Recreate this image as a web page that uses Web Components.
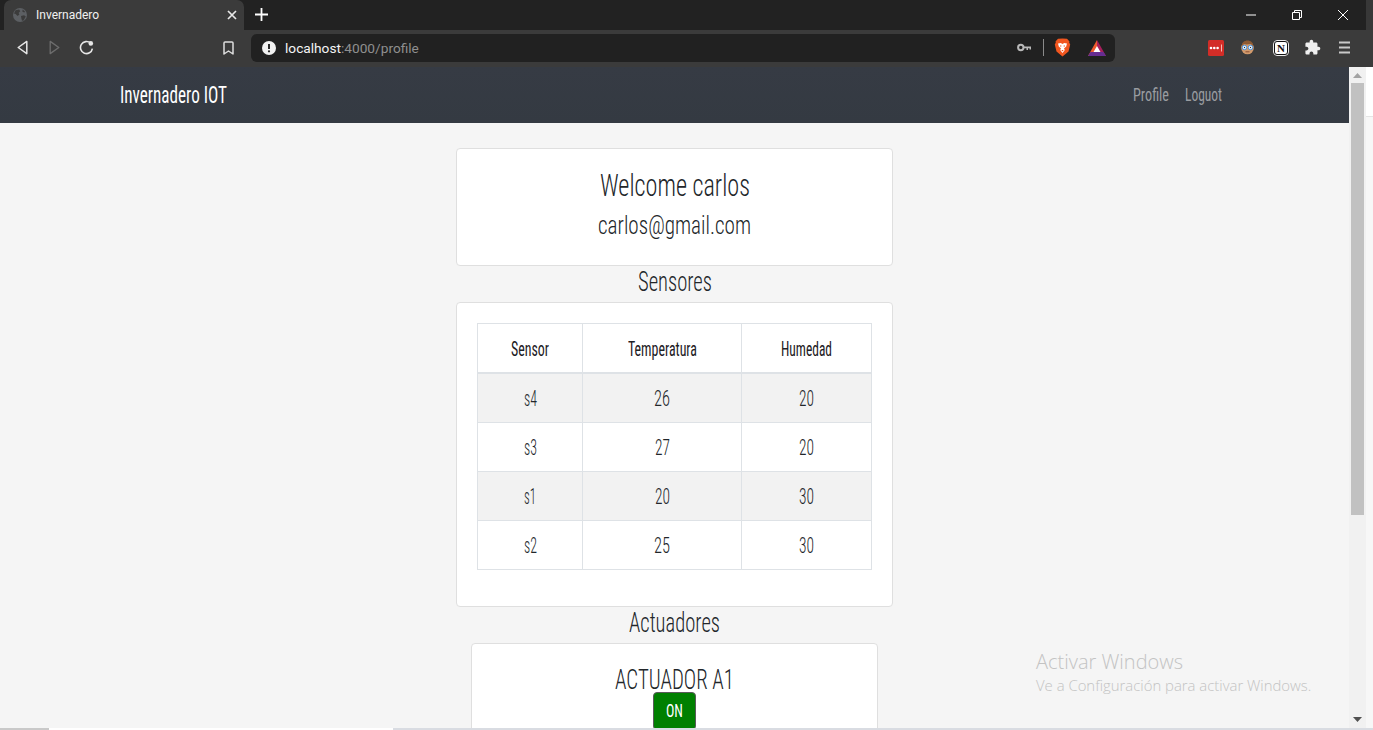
<!DOCTYPE html>
<html lang="es">
<head>
<meta charset="utf-8">
<title>Invernadero</title>
<style>
  html, body { margin: 0; height: 100%; overflow: hidden; background: #f5f5f5; }
</style>
</head>
<body>
<browser-shell>
  <app-navbar></app-navbar>
  <profile-page></profile-page>
</browser-shell>

<script>
// Oswald is not installed, so condensed text is fitted to the width it has in the design
class NarrowText extends HTMLElement {
  connectedCallback() {
    if (this.shadowRoot) return;
    this.attachShadow({ mode: 'open' });
    this.shadowRoot.innerHTML = `
      <style>
        :host {
          display: inline-block;
          white-space: nowrap;
          font-family: "Roboto Condensed", "Liberation Sans", sans-serif;
          line-height: 1;
        }
        span { display: inline-block; transform-origin: 0 50%; }
      </style>
      <span><slot></slot></span>
    `;
    this.style.fontSize = this.getAttribute('size') + 'px';
    const inner = this.shadowRoot.querySelector('span');
    const target = parseFloat(this.getAttribute('w'));
    const natural = inner.getBoundingClientRect().width;
    inner.style.transform = `scaleX(${target / natural})`;
    this.style.width = target + 'px';
  }
}
customElements.define('narrow-text', NarrowText);

class BrowserShell extends HTMLElement {
  connectedCallback() {
    this.attachShadow({ mode: 'open' });
    this.shadowRoot.innerHTML = `
      <style>
        :host {
          display: flex;
          flex-direction: column;
          height: 730px;
          width: 1373px;
          position: relative;
          overflow: hidden;
          font-family: Roboto, "Liberation Sans", sans-serif;
        }
        .view { flex: 1; display: flex; min-height: 0; }
        .page { width: 1349px; display: flex; flex-direction: column; overflow: hidden; background: #f5f5f5; }
        .edge { width: 7px; display: flex; flex-direction: column; }
        .edge i { display: block; height: 49px; background: #fff; border-bottom: 1px solid #e4e4e4; }
        .edge b { display: block; flex: 1; background: #f7f7f7; }
        .bottom { height: 2px; display: flex; background: #d9dce2; }
        .bottom i { display: block; }
      </style>
      <title-bar></title-bar>
      <nav-toolbar></nav-toolbar>
      <div class="view">
        <div class="page"><slot></slot></div>
        <page-scrollbar></page-scrollbar>
        <div class="edge"><i></i><b></b></div>
      </div>
      <div class="bottom">
        <i style="width:49px;background:#c9c9c9"></i>
        <i style="width:344px;background:#fff"></i>
        <i style="flex:1"></i>
      </div>
      <windows-mark></windows-mark>
    `;
  }
}
customElements.define('browser-shell', BrowserShell);

class TitleBar extends HTMLElement {
  connectedCallback() {
    this.attachShadow({ mode: 'open' });
    this.shadowRoot.innerHTML = `
      <style>
        :host { display: flex; height: 30px; background: #222; align-items: stretch; }
        .tab {
          margin-left: 4px;
          width: 240px;
          background: #3b3b3b;
          border-radius: 7px 7px 0 0;
          display: flex;
          align-items: center;
          padding-left: 9px;
          box-sizing: border-box;
          color: #f1f1f1;
          font-size: 12px;
        }
        .tab span { margin-left: 9px; flex: 1; }
        .tab svg.close { margin-right: 7px; }
        .plus { margin: 8px 0 0 11px; }
        .controls { margin-left: auto; width: 127px; display: flex; align-items: center; }
        .controls svg { display: block; }
        .side { width: 7px; background: #383838; }
      </style>
      <div class="tab">
        <svg width="14" height="14" viewBox="0 0 14 14">
          <circle cx="7" cy="7" r="7" fill="#5c5f63"/>
          <path d="M2.500 2.200 6.200 1.500 7.200 3.200 5.600 5 6.400 6.500 4.600 8 2.600 6 1 5.600Z M8 8 11 7.200 12.800 8.600 10.600 12.400 9 12.800 8.400 10.400Z M9.600 1.600 12 3.400 11.400 4.600 9.400 3.800Z" fill="#3b3b3b"/>
        </svg>
        <span>Invernadero</span>
        <svg class="close" width="10" height="10" viewBox="0 0 10 10"><path d="M1 1 9 9M9 1 1 9" stroke="#e8e8e8" stroke-width="1.700"/></svg>
      </div>
      <svg class="plus" width="13" height="13" viewBox="0 0 13 13"><path d="M6.500 0v13M0 6.500h13" stroke="#fff" stroke-width="1.800"/></svg>
      <div class="controls">
        <svg style="margin-left:7px" width="10" height="10" viewBox="0 0 10 10"><path d="M0 5h10" stroke="#fff" stroke-width="1"/></svg>
        <svg style="margin-left:36px" width="10" height="10" viewBox="0 0 10 10"><path d="M.5 2.500h7v7h-7zM2.500 2.500V.5h7v7h-2" fill="none" stroke="#fff" stroke-width="1"/></svg>
        <svg style="margin-left:36px" width="10" height="10" viewBox="0 0 10 10"><path d="M0 0 10 10M10 0 0 10" stroke="#fff" stroke-width="1"/></svg>
      </div>
      <div class="side"></div>
    `;
  }
}
customElements.define('title-bar', TitleBar);

class NavToolbar extends HTMLElement {
  connectedCallback() {
    this.attachShadow({ mode: 'open' });
    this.shadowRoot.innerHTML = `
      <style>
        :host { display: flex; height: 37px; box-sizing: border-box; padding-bottom: 2px; background: #3b3b3b; align-items: center; }
        svg { display: block; flex: none; }
        .omnibox {
          margin-left: 17px;
          width: 864px;
          height: 28px;
          background: #212121;
          border-radius: 6px;
          display: flex;
          align-items: center;
          box-sizing: border-box;
          padding-left: 11px;
          font-size: 13.700px;
          color: #8f8f8f;
          flex: none;
        }
        .url { margin-left: 9px; }
        .url b { font-weight: 400; color: #f4f4f4; }
        .sep { width: 1px; height: 17px; background: #8a8a8a; margin-left: 12px; }
        .notion {
          margin-left: 18px;
          width: 16px;
          height: 16px;
          box-sizing: border-box;
          border: 2px solid #111;
          outline: 1px solid #e8e8e8;
          outline-offset: -1px;
          border-radius: 4px;
          background: #fff;
          color: #111;
          font: 700 11px/12px "Liberation Serif", serif;
          text-align: center;
          flex: none;
        }
      </style>
      <svg style="margin-left:17px" width="11" height="15" viewBox="0 0 11 15"><path d="M9.800 1.400 1.200 7.500l8.600 6.100Z" fill="none" stroke="#e6e6e6" stroke-width="1.500" stroke-linejoin="round"/></svg>
      <svg style="margin-left:21px" width="11" height="15" viewBox="0 0 11 15"><path d="M1.200 1.400 9.800 7.500l-8.600 6.100Z" fill="none" stroke="#6d6d6d" stroke-width="1.300" stroke-linejoin="round"/></svg>
      <svg style="margin-left:19px" width="15" height="15" viewBox="0 0 15 15"><path d="M11.600 3.200A6 6 0 1 0 13.400 8.600" fill="none" stroke="#e6e6e6" stroke-width="1.600"/><circle cx="11.800" cy="3.400" r="2.300" fill="#e6e6e6"/></svg>
      <svg style="margin-left:129px" width="11" height="14" viewBox="0 0 11 14"><path d="M1 2a1 1 0 0 1 1-1h7a1 1 0 0 1 1 1v11L5.500 10 1 13Z" fill="none" stroke="#dedede" stroke-width="1.500" stroke-linejoin="round"/></svg>
      <div class="omnibox">
        <svg width="14" height="14" viewBox="0 0 14 14"><circle cx="7" cy="7" r="7" fill="#f2f2f2"/><path d="M7 3v5" stroke="#212121" stroke-width="1.900"/><circle cx="7" cy="10.300" r="1.100" fill="#212121"/></svg>
        <span class="url"><b>localhost</b>:4000/profile</span>
        <svg style="margin-left:598px" width="14" height="9" viewBox="0 0 14 9"><circle cx="3.800" cy="4.500" r="2.700" fill="none" stroke="#b9b9b9" stroke-width="2"/><path d="M6.500 3.500H14V6.500H12.500V5.300H11V7H9.500V5.300H6.500Z" fill="#b9b9b9"/></svg>
        <div class="sep"></div>
        <svg style="margin-left:10px" width="17" height="19" viewBox="0 0 17 19">
          <path d="M8.500 0.500 13 .8l2.500 2.600-.3 1 1 2-1.700 7.200L8.500 18.500 2.500 13.600.8 6.400l1-2-.3-1L4 .8Z" fill="#f1561f"/>
          <path d="M4 5.500 6.800 5 8.500 6 10.200 5 13 5.500 12.200 8.600 10 10.500 10.800 12 8.500 15 6.200 12 7 10.500 4.800 8.600Z" fill="#fff"/>
          <path d="M6 7.500h1.400v1.100H6zM9.600 7.500H11v1.100H9.600zM7.300 12h2.400L8.500 13.400Z" fill="#f1561f"/>
        </svg>
        <svg style="margin-left:17px" width="18" height="16" viewBox="0 0 18 16">
          <path d="M9 0 0 16H9Z" fill="#ef5a2e"/>
          <path d="M9 0 18 16H9Z" fill="#a81f5c"/>
          <path d="M0 16H18L15.500 12H2.500Z" fill="#662d91"/>
          <path d="M9 6 12.500 12H5.500Z" fill="#fff"/>
        </svg>
      </div>
      <svg style="margin-left:93px" width="16" height="16" viewBox="0 0 16 16">
        <rect width="16" height="16" rx="1.500" fill="#d32d27"/>
        <circle cx="3" cy="8" r="1.300" fill="#fff"/><circle cx="6.300" cy="8" r="1.300" fill="#fff"/><circle cx="9.600" cy="8" r="1.300" fill="#fff"/>
        <rect x="13" y="4.500" width="1" height="7" fill="#f3b8b5"/>
      </svg>
      <svg style="margin-left:16px" width="15" height="15" viewBox="0 0 15 15">
        <circle cx="7.500" cy="8" r="6.300" fill="#d29a6c"/>
        <path d="M1.800 6.500C1.500 2.500 4.500.5 7.500.5s6 2 5.700 6L11 4 6.500 4.600 4 4Z" fill="#8d5a33"/>
        <circle cx="4.500" cy="7.500" r="2.200" fill="#fff" stroke="#3f8fe0" stroke-width="1"/>
        <circle cx="10.500" cy="7.500" r="2.200" fill="#fff" stroke="#3f8fe0" stroke-width="1"/>
        <circle cx="4.500" cy="7.500" r=".7" fill="#234"/><circle cx="10.500" cy="7.500" r=".7" fill="#234"/>
        <path d="M5.500 11.800h4" stroke="#8a4f33" stroke-width="1"/>
      </svg>
      <div class="notion">N</div>
      <svg style="margin-left:15px" width="17" height="17" viewBox="0 0 24 24"><path d="M20.500 11H19V7c0-1.100-.9-2-2-2h-4V3.500C13 2.120 11.880 1 10.500 1S8 2.120 8 3.500V5H4c-1.100 0-1.990.9-1.990 2v3.800H3.500c1.490 0 2.700 1.210 2.700 2.700s-1.210 2.700-2.700 2.700H2V20c0 1.100.9 2 2 2h3.800v-1.500c0-1.490 1.210-2.700 2.700-2.700 1.490 0 2.700 1.210 2.700 2.700V22H17c1.100 0 2-.9 2-2v-4h1.500c1.380 0 2.500-1.120 2.500-2.500S21.880 11 20.500 11z" fill="#efefef"/></svg>
      <svg style="margin-left:18px" width="11" height="13" viewBox="0 0 11 13"><path d="M0 1.500h11M0 6.500h11M0 11.500h11" stroke="#c9c9c9" stroke-width="2"/></svg>
    `;
  }
}
customElements.define('nav-toolbar', NavToolbar);

class AppNavbar extends HTMLElement {
  connectedCallback() {
    this.attachShadow({ mode: 'open' });
    this.shadowRoot.innerHTML = `
      <style>
        :host {
          display: flex;
          flex: none;
          height: 56px;
          background: linear-gradient(#363b44, #343a42);
          align-items: center;
          box-sizing: border-box;
          padding: 0 127px 0 120px;
        }
        .brand { color: #fff; }
        .links { margin-left: auto; margin-bottom: 2px; display: flex; gap: 16px; color: #9a9da1; }
      </style>
      <narrow-text class="brand" size="23" w="107">Invernadero IOT</narrow-text>
      <div class="links">
        <narrow-text size="19" w="36">Profile</narrow-text>
        <narrow-text size="19" w="37">Loguot</narrow-text>
      </div>
    `;
  }
}
customElements.define('app-navbar', AppNavbar);

class InfoCard extends HTMLElement {
  connectedCallback() {
    this.attachShadow({ mode: 'open' });
    this.shadowRoot.innerHTML = `
      <style>
        :host {
          display: block;
          width: 437px;
          box-sizing: border-box;
          background: #fff;
          border: 1px solid #dfdfdf;
          border-radius: 4px;
          padding: 20px;
        }
      </style>
      <slot></slot>
    `;
  }
}
customElements.define('info-card', InfoCard);

// centred heading with a fixed line box, h3 / h4 sizes from the page
class CardHeading extends HTMLElement {
  connectedCallback() {
    this.attachShadow({ mode: 'open' });
    this.shadowRoot.innerHTML = `
      <style>
        :host {
          display: flex;
          justify-content: center;
          align-items: center;
          box-sizing: border-box;
          color: #22262a;
          font-weight: 300;
        }
      </style>
      <slot></slot>
    `;
    this.style.height = this.getAttribute('h') + 'px';
  }
}
customElements.define('card-heading', CardHeading);

class SensorTable extends HTMLElement {
  connectedCallback() {
    this.attachShadow({ mode: 'open' });
    const rows = [
      [['s4', 13], ['26', 16], ['20', 15]],
      [['s3', 13], ['27', 15], ['20', 15]],
      [['s1', 12], ['20', 15], ['30', 15]],
      [['s2', 13], ['25', 16], ['30', 15]]
    ];
    const cell = ([t, w]) => `<td><narrow-text size="22" w="${w}">${t}</narrow-text></td>`;
    this.shadowRoot.innerHTML = `
      <style>
        :host { display: block; margin-bottom: 16px; color: #22262a; font-weight: 300; }
        table { border-collapse: collapse; table-layout: fixed; width: 395px; }
        th, td { border: 1px solid #dee2e6; padding: 0; text-align: center; vertical-align: middle; box-sizing: content-box; }
        td { height: 46px; padding-top: 2px; }
        th { height: 44px; padding-top: 4px; font-weight: 400; color: #1d2024; border-bottom-width: 2px; }
        tbody tr:nth-child(odd) { background: #f2f2f2; }
      </style>
      <table>
        <colgroup><col style="width:105px"><col style="width:159px"><col style="width:130px"></colgroup>
        <thead>
          <tr>
            <th><narrow-text size="20" w="38">Sensor</narrow-text></th>
            <th><narrow-text size="20" w="69">Temperatura</narrow-text></th>
            <th><narrow-text size="20" w="51">Humedad</narrow-text></th>
          </tr>
        </thead>
        <tbody>
          ${rows.map(r => `<tr>${r.map(cell).join('')}</tr>`).join('')}
        </tbody>
      </table>
    `;
  }
}
customElements.define('sensor-table', SensorTable);

class ActuatorCard extends HTMLElement {
  connectedCallback() {
    this.attachShadow({ mode: 'open' });
    this.shadowRoot.innerHTML = `
      <style>
        :host {
          display: block;
          width: 407px;
          box-sizing: border-box;
          background: #fff;
          border: 1px solid #dfdfdf;
          border-radius: 4px;
          padding: 20px;
          flex: none;
        }
        card-heading { padding-top: 6px; }
        .btn {
          display: flex;
          justify-content: center;
          align-items: center;
          width: 43px;
          height: 38px;
          box-sizing: border-box;
          margin: 0 auto;
          padding-bottom: 1px;
          background: #008000;
          border: 1px solid #5a5a5a;
          border-radius: 4px;
          color: #fff;
          font-weight: 400;
        }
      </style>
      <card-heading h="28"><narrow-text size="27" w="119">ACTUADOR A1</narrow-text></card-heading>
      <div class="btn"><narrow-text size="19" w="17">ON</narrow-text></div>
    `;
  }
}
customElements.define('actuator-card', ActuatorCard);

class ProfilePage extends HTMLElement {
  connectedCallback() {
    this.attachShadow({ mode: 'open' });
    this.shadowRoot.innerHTML = `
      <style>
        :host {
          display: flex;
          flex-direction: column;
          align-items: center;
          padding-top: 25px;
          flex: none;
        }
        card-heading.sec { width: 100%; padding-bottom: 2px; }
        .gap-h3 { margin-bottom: 9.400px; }
        .gap-h4 { margin-bottom: 5.200px; }
      </style>
      <info-card>
        <card-heading class="gap-h3" h="32.600"><narrow-text size="32" w="150">Welcome carlos</narrow-text></card-heading>
        <card-heading class="gap-h4" h="28.800"><narrow-text size="26" w="153">carlos@gmail.com</narrow-text></card-heading>
      </info-card>
      <card-heading class="sec" h="36"><narrow-text size="27" w="74">Sensores</narrow-text></card-heading>
      <info-card><sensor-table></sensor-table></info-card>
      <card-heading class="sec" h="36"><narrow-text size="27" w="91">Actuadores</narrow-text></card-heading>
      <actuator-card></actuator-card>
    `;
  }
}
customElements.define('profile-page', ProfilePage);

class PageScrollbar extends HTMLElement {
  connectedCallback() {
    this.attachShadow({ mode: 'open' });
    this.shadowRoot.innerHTML = `
      <style>
        :host {
          display: flex;
          flex-direction: column;
          align-items: center;
          width: 17px;
          background: #f1f1f1;
        }
        svg { display: block; flex: none; }
        .thumb { width: 13px; height: 432px; margin-top: 5px; background: #c1c1c1; flex: none; }
        .down { margin-top: auto; margin-bottom: 6px; }
      </style>
      <svg style="margin-top:6px" width="9" height="5" viewBox="0 0 9 5"><path d="M4.500 0 9 5H0Z" fill="#a3a3a3"/></svg>
      <div class="thumb"></div>
      <svg class="down" width="9" height="5" viewBox="0 0 9 5"><path d="M4.500 5 9 0H0Z" fill="#505050"/></svg>
    `;
  }
}
customElements.define('page-scrollbar', PageScrollbar);

// watermark floats over the page
class WindowsMark extends HTMLElement {
  connectedCallback() {
    this.attachShadow({ mode: 'open' });
    this.shadowRoot.innerHTML = `
      <style>
        :host {
          position: absolute;
          left: 1036px;
          top: 649px;
          color: #c3c3c3;
          font-family: "Open Sans", sans-serif;
          font-weight: 300;
          white-space: nowrap;
        }
        div { height: 26px; }
        .big { font-size: 20px; line-height: 26px; }
        .small { font-size: 14.900px; line-height: 20px; height: 20px; }
      </style>
      <div class="big">Activar Windows</div>
      <div class="small">Ve a Configuración para activar Windows.</div>
    `;
  }
}
customElements.define('windows-mark', WindowsMark);
</script>
</body>
</html>
